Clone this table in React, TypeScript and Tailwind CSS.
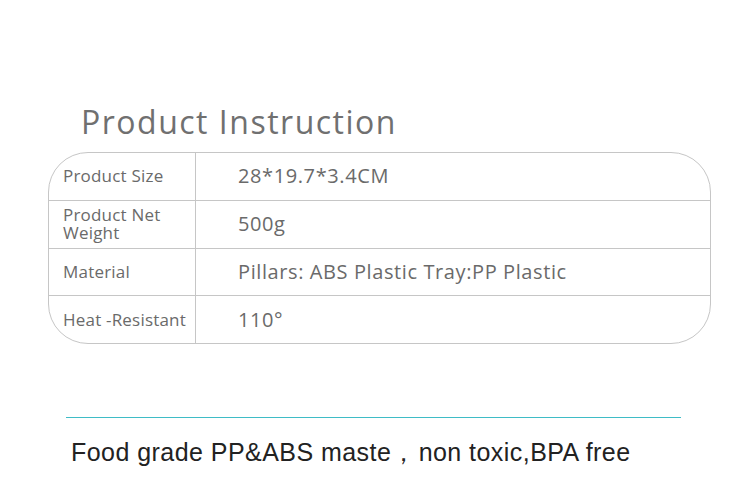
import React from 'react';

const rows = [
  { label: ['Product Size'], value: '28*19.7*3.4CM' },
  { label: ['Product Net', 'Weight'], value: '500g' },
  { label: ['Material'], value: 'Pillars: ABS Plastic Tray:PP Plastic' },
  { label: ['Heat -Resistant'], value: '110°' },
];

const App = () => {
  return (
    <div className="w-[750px] h-[489px] bg-white overflow-hidden flex flex-col" style={{ fontFamily: '"Open Sans", "Noto Sans", sans-serif' }}>
      <h1 className="ml-[81px] mt-[99px] h-[46px] text-[32px] leading-[46px] text-[#707070] font-normal tracking-[1.5px]">
        Product Instruction
      </h1>

      <div className="ml-[48px] mt-[7px] w-[663px] h-[192px] border border-[#c6c6c6] rounded-[40px] overflow-hidden flex flex-col">
        {rows.map((row, i) => (
          <div
            key={i}
            className={`flex flex-1 ${i < rows.length - 1 ? 'border-b border-[#c6c6c6]' : ''}`}
          >
            <div className="w-[147px] border-r border-[#c6c6c6] flex items-center pl-[14px] text-[17px] leading-[18px] text-[#6a6a6a] tracking-[0.2px]">
              <span>
                {row.label.map((l, j) => (
                  <React.Fragment key={l}>
                    {j > 0 && <br />}
                    {l}
                  </React.Fragment>
                ))}
              </span>
            </div>
            <div className="flex-1 flex items-center pl-[42px] text-[20px] text-[#6a6a6a] tracking-[0.6px]">
              {row.value}
            </div>
          </div>
        ))}
      </div>

      <div className="ml-[66px] mt-[73px] w-[615px] h-px bg-[#3fbcc6]" />

      <p
        className="ml-[71px] mt-[19px] text-[25px] leading-[30px] text-[#222] tracking-[0.45px]"
        style={{ fontFamily: '"Liberation Sans", Arial, sans-serif' }}
      >
        Food grade PP&amp;ABS maste<span className="tracking-[-5px]">，</span> non toxic,BPA free
      </p>
    </div>
  );
};

export default App;
